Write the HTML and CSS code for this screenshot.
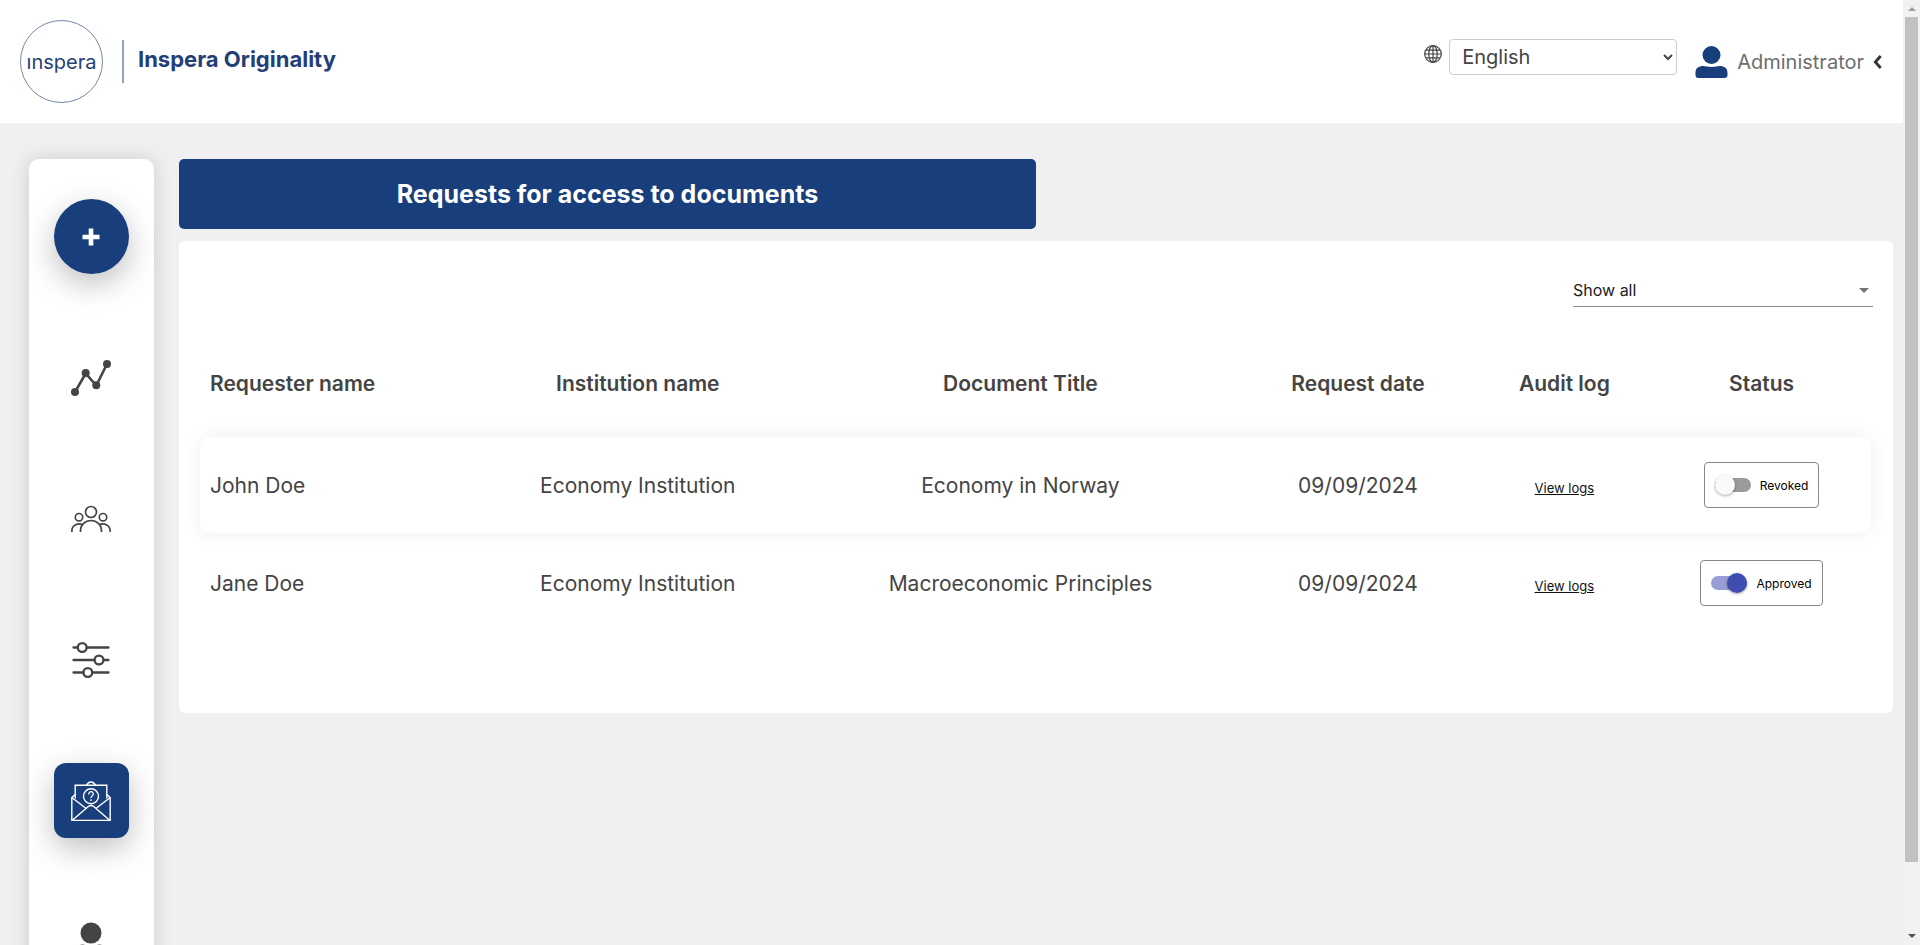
FILE: index.html
```html
<!DOCTYPE html>
<html lang="en">
<head>
<meta charset="utf-8">
<title>Inspera Originality</title>
<link rel="stylesheet" href="styles.css">
</head>
<body>
<div class="app">
  <header class="topbar">
    <div class="brand">
      <span class="brand-logo">ınspera</span>
      <span class="brand-name">Inspera Originality</span>
    </div>
    <div class="account">
      <label class="language">
        <svg class="globe" viewBox="0 0 18 18" aria-label="Language"><g fill="none" stroke="currentColor" stroke-width="1.200"><circle cx="9" cy="9" r="8.3"/><ellipse cx="9" cy="9" rx="4.2" ry="8.3"/><path d="M9 .7v16.6M.7 9h16.6M2 5.2h14M2 12.8h14"/></g></svg>
        <select class="language-select"><option>English</option></select>
      </label>
      <button class="user" type="button">
        <svg class="user-icon" viewBox="0 0 32 32"><circle cx="16" cy="9" r="9" fill="currentColor"/><path fill="currentColor" d="M0 29v-2c0-5 3-7 8-7 2 0 4 1 8 1s6-1 8-1c5 0 8 2 8 7v2c0 2-1 3-3 3H3c-2 0-3-1-3-3z"/></svg>
        <span>Administrator</span>
        <svg class="user-chevron" viewBox="0 0 8 14"><path d="M7.200 1 1.8 7l5.400 6" fill="none" stroke="currentColor" stroke-width="2.800"/></svg>
      </button>
    </div>
  </header>
  <div class="body">
    <nav class="sidebar">
      <button class="nav-item nav-add" type="button" aria-label="Add">
        <svg class="plus" viewBox="0 0 18 18"><path d="M9 .5v17M.5 9h17" stroke="currentColor" stroke-width="4.6"/></svg>
      </button>
      <button class="nav-item" type="button" aria-label="Statistics">
        <svg class="nav-icon" viewBox="0 0 40 40"><path d="M4 34 14.7 15.500 25.300 27.500 36 6" fill="none" stroke="currentColor" stroke-width="2.600"/><g fill="currentColor"><circle cx="4" cy="34" r="4"/><circle cx="14.700" cy="15" r="4"/><circle cx="25.300" cy="27.300" r="4"/><circle cx="36" cy="6" r="4"/></g></svg>
      </button>
      <button class="nav-item" type="button" aria-label="Users">
        <svg class="nav-icon" viewBox="0 0 40 40"><g fill="none" stroke="currentColor" stroke-width="1.700"><circle cx="20" cy="13" r="5.500"/><circle cx="8" cy="18.200" r="3.700"/><circle cx="32" cy="18.200" r="3.700"/><path d="M9.500 33v-1.500a10.500 10 0 0 1 21 0V33M.9 33v-1.500a7 6.500 0 0 1 11-5.300M39.100 33v-1.500a7 6.500 0 0 0-11-5.300"/></g></svg>
      </button>
      <button class="nav-item" type="button" aria-label="Settings">
        <svg class="nav-icon" viewBox="0 0 40 40"><g fill="none" stroke="currentColor" stroke-width="2.300" stroke-linecap="round"><path d="M2.500 7.500h4M16 7.500h21.500M2.500 20h20M33 20h4.500M2.500 32.500h10M22 32.500h15.500"/><circle cx="11.200" cy="7.500" r="4.400"/><circle cx="28" cy="20" r="4.400"/><circle cx="16.800" cy="32.500" r="4.400"/></g></svg>
      </button>
      <button class="nav-item nav-active" type="button" aria-label="Access requests">
        <svg class="nav-icon" viewBox="0 0 40 40"><g fill="none" stroke="currentColor" stroke-width="1.400"><path d="M4.200 17.500V4.300h31.600v13.200M15.500 4c1.200-2 2.500-3 4.500-3s3.300 1 4.500 3"/><circle cx="20" cy="15.300" r="7.500"/><path d="M4.200 13.500.8 16.500v23h38.400v-23l-3.400-3M.8 16.500 14.500 27M39.200 16.500 25.500 27M1 39.500l16-13.800q3-2.400 6 0l16 13.800"/><path d="M17.800 13.400c0-3.600 4.500-3.400 4.400-.5 0 2-2.200 2-2.200 4.100M20 18.300v1.600" stroke-width="1.300"/></g></svg>
      </button>
      <button class="nav-item" type="button" aria-label="Groups">
        <svg class="nav-icon" viewBox="0 0 40 40"><g fill="currentColor"><circle cx="20" cy="11" r="10.500"/><circle cx="11.500" cy="30" r="7.500"/><circle cx="28.500" cy="30" r="7.500"/></g></svg>
      </button>
    </nav>
    <main class="content">
      <h1 class="banner">Requests for access to documents</h1>
      <section class="panel">
        <div class="filters">
          <div class="filter">
            <select class="filter-select" aria-label="Filter requests"><option>Show all</option></select>
            <svg class="filter-arrow" viewBox="0 0 10 5"><path d="M0 0h10L5 5z" fill="currentColor"/></svg>
          </div>
        </div>
        <table class="requests">
          <colgroup><col class="col-name"><col class="col-institution"><col class="col-title"><col class="col-date"><col class="col-log"><col class="col-status"></colgroup>
          <thead>
            <tr><th>Requester name</th><th>Institution name</th><th>Document Title</th><th>Request date</th><th>Audit log</th><th>Status</th></tr>
          </thead>
          <tbody>
            <tr class="raised">
              <td>John Doe</td><td>Economy Institution</td><td>Economy in Norway</td><td>09/09/2024</td>
              <td><a class="log-link" href="#">View logs</a></td>
              <td><label class="status"><input class="switch" type="checkbox">Revoked</label></td>
            </tr>
            <tr>
              <td>Jane Doe</td><td>Economy Institution</td><td>Macroeconomic Principles</td><td>09/09/2024</td>
              <td><a class="log-link" href="#">View logs</a></td>
              <td><label class="status"><input class="switch" type="checkbox" checked>Approved</label></td>
            </tr>
          </tbody>
        </table>
      </section>
    </main>
  </div>
</div>
<div class="scrollbar" aria-hidden="true">
  <svg class="scroll-arrow scroll-up" viewBox="0 0 8 4"><path d="M0 4h8L4 0z" fill="currentColor"/></svg>
  <div class="scroll-track"><div class="scroll-thumb"></div></div>
  <svg class="scroll-arrow" viewBox="0 0 8 4"><path d="M0 0h8L4 4z" fill="currentColor"/></svg>
</div>
</body>
</html>
```
FILE: styles.css
```css
* { box-sizing: border-box; }

body {
  display: flex;
  height: 100vh;
  margin: 0;
  overflow: hidden;
  background: #f0f0f2;
  color: #444;
  font-family: Inter, "Liberation Sans", sans-serif;
  font-size: 20px;
}

button, select { font: inherit; color: inherit; }
button { padding: 0; border: 0; background: none; }

.app { flex: 1; min-width: 0; overflow: hidden; }

.topbar {
  display: flex;
  justify-content: space-between;
  padding: 20px;
  background: #fff;
}

.brand { display: flex; align-items: center; color: #243f77; }
.brand-logo {
  display: flex;
  align-items: center;
  justify-content: center;
  width: 83px;
  height: 83px;
  margin-right: 19px;
  border: 1px solid #7485a8;
  border-radius: 50%;
}
.brand-name {
  padding: 7px 0 11px 14px;
  border-left: 2px solid #93a1c0;
  font-size: 22px;
  font-weight: 700;
  line-height: 25px;
}

.account { display: flex; align-items: flex-start; gap: 18px; padding-top: 19px; }
.language { display: flex; gap: 7px; }
.globe { width: 18px; height: 18px; margin-top: 6px; }
.language-select {
  width: 228px;
  height: 36px;
  padding: 0 8px;
  border: 1px solid #ccc;
  border-radius: 4px;
  background: #fff;
}
.user { display: flex; align-items: center; gap: 9px; margin-top: 7px; color: #6e6e6e; }
.user-icon { width: 33px; height: 32px; color: #183f7c; }
.user-chevron { width: 9px; height: 14px; margin-right: 1px; color: #333; }

.body { display: flex; align-items: flex-start; gap: 25px; padding: 36px 10px 0 29px; }

.sidebar {
  display: flex;
  flex: none;
  flex-direction: column;
  align-items: center;
  gap: 66px;
  width: 125px;
  padding: 40px 0;
  border-radius: 10px;
  background: #fff;
  box-shadow: 0 0 20px rgba(0, 0, 0, .15);
}
.nav-item {
  display: flex;
  align-items: center;
  justify-content: center;
  width: 75px;
  height: 75px;
  padding-right: 1px;
}
.nav-icon { width: 40px; height: 40px; }
.nav-add, .nav-active {
  background: #183f7c;
  color: #fff;
  box-shadow: 0 10px 30px rgba(0, 0, 0, .25);
}
.nav-add { border-radius: 50%; }
.nav-active { border-radius: 12px; }
.plus { width: 18px; height: 18px; }

.content { flex: 1; min-width: 0; }
.banner {
  width: 50%;
  margin: 0 0 12px;
  border-radius: 5px;
  background: #183f7c;
  color: #fff;
  font-size: 25px;
  font-weight: 700;
  line-height: 70px;
  text-align: center;
}

.panel { padding: 33px 20px 80px; border-radius: 5px; background: #fff; }
.filters { display: flex; justify-content: flex-end; }
.filter {
  display: flex;
  align-items: center;
  width: 300px;
  height: 33px;
  border-bottom: 1px solid #8b8b8b;
}
.filter-select {
  flex: 1;
  appearance: none;
  padding: 0;
  border: 0;
  background: none;
  color: #212121;
  font-size: 16px;
}
.filter-arrow { width: 10px; height: 5px; margin-right: 4px; color: #757575; }

.requests {
  width: 100%;
  margin-top: 22px;
  padding: 0 2px 0 1px;
  border-spacing: 0 2px;
  font-size: 21px;
  table-layout: fixed;
}
.col-name { width: 16.4%; }
.col-institution { width: 19.6%; }
.col-title { width: 26.2%; }
.col-date { width: 14.2%; }
.col-log { width: 10.5%; }
.col-status { width: 13.1%; }
.requests th, .requests td { height: 96px; padding: 0; text-align: center; }
.requests th { height: 104px; font-weight: 600; }
.requests th:first-child, .requests td:first-child { padding-left: 10px; text-align: left; }
.raised { border-radius: 10px; box-shadow: 0 0 20px rgba(0, 0, 0, .07); }

.log-link { color: #111; font-size: 13px; }
.status {
  display: inline-flex;
  align-items: center;
  gap: 9px;
  height: 46px;
  padding: 0 10px;
  border: 1px solid #888;
  border-radius: 4px;
  color: #000;
  font-size: 12px;
  vertical-align: middle;
}
.switch {
  display: flex;
  align-items: center;
  width: 36px;
  height: 14px;
  margin: 0;
  appearance: none;
  border-radius: 7px;
  background: #9b9b9b;
}
.switch::before {
  width: 20px;
  height: 20px;
  border-radius: 50%;
  background: #fafafa;
  box-shadow: 0 1px 3px rgba(0, 0, 0, .35);
  content: "";
}
.switch:checked { justify-content: flex-end; background: #989fd6; }
.switch:checked::before { background: #3f4db0; }

.scrollbar {
  display: flex;
  flex: none;
  flex-direction: column;
  align-items: center;
  justify-content: space-between;
  width: 17px;
  padding: 7px 0;
  background: #f1f1f1;
}
.scroll-arrow { width: 8px; height: 4px; color: #505050; }
.scroll-up { color: #a0a0a0; }
.scroll-track { flex: 1; width: 13px; margin: 6px 0; }
.scroll-thumb { height: 92.8%; background: #c1c1c1; }
```
